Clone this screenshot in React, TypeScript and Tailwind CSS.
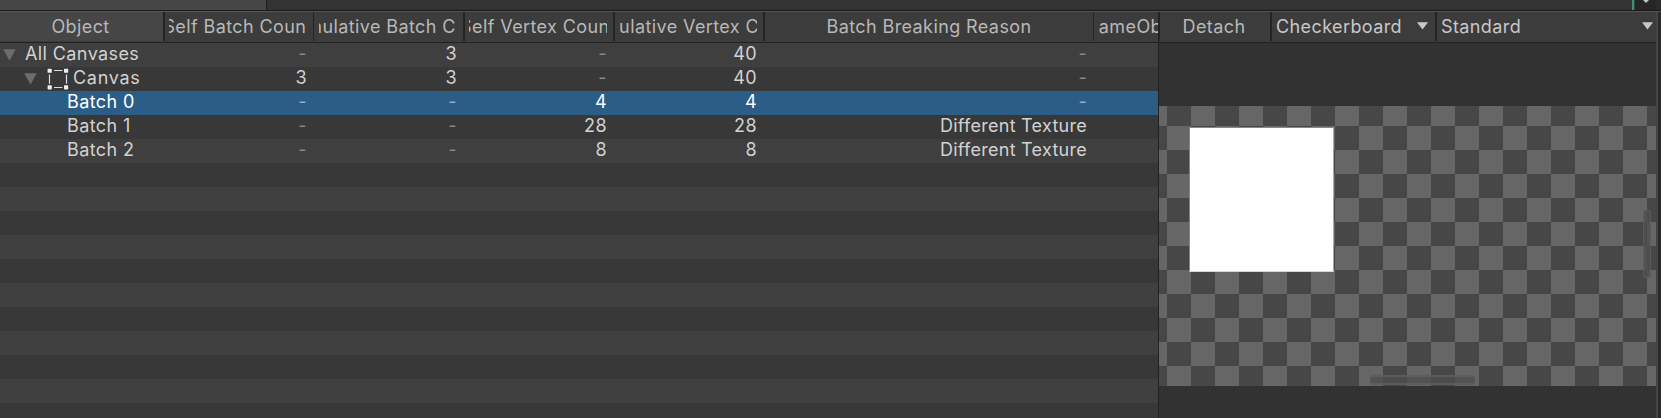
import clsx from 'clsx';

const COLUMNS = [
  { title: 'Object', border: 'border-r-2', pad: 'pl-1 pr-[6px]', shift: '' },
  { title: 'Self Batch Count', border: 'border-r', pad: 'pl-[4px] pr-[7px]', shift: 'ml-[1px]' },
  { title: 'Cumulative Batch Count', border: 'border-r-2', pad: 'pl-[5px] pr-2', shift: 'ml-[3px]' },
  { title: 'Self Vertex Count', border: 'border-r-2', pad: 'pl-1 pr-[6px]', shift: '' },
  { title: 'Cumulative Vertex Count', border: 'border-r-2', pad: 'pl-1 pr-[6px]', shift: 'ml-[1px]' },
  { title: 'Batch Breaking Reason', border: 'border-r', pad: 'pl-1 pr-1', shift: '' },
  { title: 'GameObjects', border: '', pad: 'pl-1', shift: '-ml-[13px]' },
];

const ROWS = [
  { name: 'All Canvases', depth: 0, cells: ['-', '3', '-', '40', '-'] },
  { name: 'Canvas', depth: 1, cells: ['3', '3', '-', '40', '-'] },
  { name: 'Batch 0', depth: 2, selected: true, cells: ['-', '-', '4', '4', '-'] },
  { name: 'Batch 1', depth: 2, cells: ['-', '-', '28', '28', 'Different Texture'] },
  { name: 'Batch 2', depth: 2, cells: ['-', '-', '8', '8', 'Different Texture'] },
];

const EMPTY_ROWS = 11;

const GRID = 'grid shrink-0 grid-cols-[165px_149px_151px_150px_150px_329px_64px]';

function Foldout({ className }: { className?: string }) {
  return (
    <svg viewBox="0 0 13 12" className={clsx('w-[13px] h-3 shrink-0', className)}>
      <path d="M0.3 0.3h12.4L6.5 11.8z" fill="#6c6c6c" />
    </svg>
  );
}

function Caret() {
  return (
    <svg viewBox="0 0 11 8" className="w-[11px] h-2 shrink-0 -mt-px">
      <path d="M0 0.3h11L5.5 7.6z" fill="#c8c8c8" />
    </svg>
  );
}

function CanvasIcon() {
  return (
    <svg viewBox="0 0 22 22" className="w-[22px] h-[22px] ml-[10px] shrink-0">
      <g fill="#eeeeee">
        <rect x="0.6" y="0.8" width="4.2" height="4" rx="0.6" />
        <rect x="17" y="0.8" width="4.2" height="4" rx="0.6" />
        <rect x="0.6" y="17.2" width="4.2" height="4.2" rx="0.6" />
        <rect x="17" y="17.2" width="4.2" height="4.2" rx="0.6" />
      </g>
      <path d="M7 2.5h8.4M7 19.5h8.4M2.5 6.5v9.2M19.5 6.5v9.2" stroke="#dcdcdc" strokeWidth="1.2" fill="none" />
    </svg>
  );
}

function TopStrip() {
  return (
    <div className="h-[10px] flex">
      <div className="w-[266px] bg-[#464646]" />
      <div className="w-px bg-[#1c1c1c]" />
      <div className="flex-1 bg-[#333333]" />
      <div className="w-[2px] bg-[#3f8f7c]" />
      <div className="w-px bg-[#35483f]" />
      <div className="w-[21px] bg-[#262626] flex justify-center">
        <svg viewBox="0 0 6 3" className="w-[6px] h-[3px]">
          <path d="M0 0h6L3 3z" fill="#c4c4c4" />
        </svg>
      </div>
      <div className="w-[5px] bg-[#2a2a2a]" />
    </div>
  );
}

function BatchTable() {
  return (
    <div className="w-[1158px] flex flex-col overflow-hidden">
      <div className={clsx(GRID, 'h-[31px] border-b border-[#222222] bg-[#3c3c3c] text-[#b8b8b8]')}>
        {COLUMNS.map((col, i) => (
          <div
            key={col.title}
            className={clsx('h-[29px] border-[#232323]', col.border, col.pad, i === 0 ? 'bg-[#464646]' : 'bg-[#3c3c3c]')}
          >
            <div
              className={clsx(
                'h-full flex overflow-hidden whitespace-nowrap leading-[29px]',
                i === 6 ? 'justify-start' : 'justify-center'
              )}
            >
              <span className={col.shift}>{col.title}</span>
            </div>
          </div>
        ))}
      </div>

      {ROWS.map((row, i) => (
        <div
          key={row.name}
          className={clsx(
            GRID,
            'h-6 leading-6',
            row.selected ? 'bg-[#2c5d87] text-white' : 'text-[#d2d2d2]',
            !row.selected && (i % 2 === 0 ? 'bg-[#3f3f3f]' : 'bg-[#383838]')
          )}
        >
          <div className="flex items-center">
            {row.depth === 0 && <Foldout className="ml-[3px] mr-[9px]" />}
            {row.depth === 1 && (
              <>
                <Foldout className="ml-6" />
                <CanvasIcon />
              </>
            )}
            <span
              className={clsx(
                '-mt-[2px]',
                row.depth === 1 && 'ml-1 tracking-[0.7px]',
                row.depth === 2 && 'ml-[67px]'
              )}
            >
              {row.name}
            </span>
          </div>
          {row.cells.map((cell, c) => (
            <div
              key={c}
              className={clsx(
                'text-right -mt-px',
                c === 0 || c === 4 ? 'pr-[7px]' : 'pr-2',
                c === 4 && 'tracking-[0.27px]',
                cell === '-' && (row.selected ? 'text-[#95aec3]' : 'text-[#8a8a8a]')
              )}
            >
              {cell}
            </div>
          ))}
        </div>
      ))}

      {Array.from({ length: EMPTY_ROWS }, (_, i) => (
        <div key={i} className={clsx('h-6 shrink-0', i % 2 === 0 ? 'bg-[#383838]' : 'bg-[#3f3f3f]')} />
      ))}
    </div>
  );
}

function Preview() {
  return (
    <div className="w-[497px] flex flex-col">
      <div className="h-[31px] flex border-b border-[#222222] bg-[#3c3c3c] leading-[29px]">
        <div className="w-[113px] h-[29px] border-l border-r-2 border-[#232323] pr-[2px] text-center text-[#b8b8b8]">
          Detach
        </div>
        <div className="w-[165px] h-[29px] border-r-2 border-[#232323] flex items-center justify-between pl-1 pr-[7px] text-[#c8c8c8]">
          <span>Checkerboard</span>
          <Caret />
        </div>
        <div className="flex-1 h-[29px] flex items-center justify-between pl-1 pr-[3px] text-[#c8c8c8]">
          <span>Standard</span>
          <Caret />
        </div>
      </div>
      <div className="h-[63px] bg-[#323232]" />
      <div className="h-[280px] relative bg-[repeating-conic-gradient(#474747_0%_25%,#666666_25%_50%)] bg-[length:48px_48px] bg-[position:-16px_-4px]">
        {/* mesh drawn on the free preview canvas */}
        <div className="absolute left-[30px] top-[21px] w-[145px] h-[145px] bg-white border border-t-[#868686] border-l-[#868686] border-r-[#a8a8a8] border-b-[#d8d8d8]" />
        <div className="absolute left-[211px] top-[269px] w-[105px] h-[10px] rounded-[3px] bg-[#4d4d4d]/75 border-y-2 border-[#606060]/80" />
        <div className="absolute left-[484px] top-[104px] w-2 h-[68px] rounded-[3px] bg-[#4d4d4d]/75 border border-[#606060]/80" />
      </div>
      <div className="flex-1 bg-[#323232]" />
    </div>
  );
}

export default function App() {
  return (
    <div className="w-[1661px] h-[418px] overflow-hidden flex flex-col bg-[#323232] font-['Inter',sans-serif] text-[18px] tracking-[0.4px]">
      <TopStrip />
      <div className="h-px bg-[#191919]" />
      <div className="h-px bg-[#555555]" />
      <div className="flex-1 min-h-0 flex">
        <BatchTable />
        <div className="w-px bg-[#222222]" />
        <Preview />
        <div className="w-[2px] bg-[#454545]" />
        <div className="flex-1 bg-[#2a2a2a]" />
      </div>
    </div>
  );
}
